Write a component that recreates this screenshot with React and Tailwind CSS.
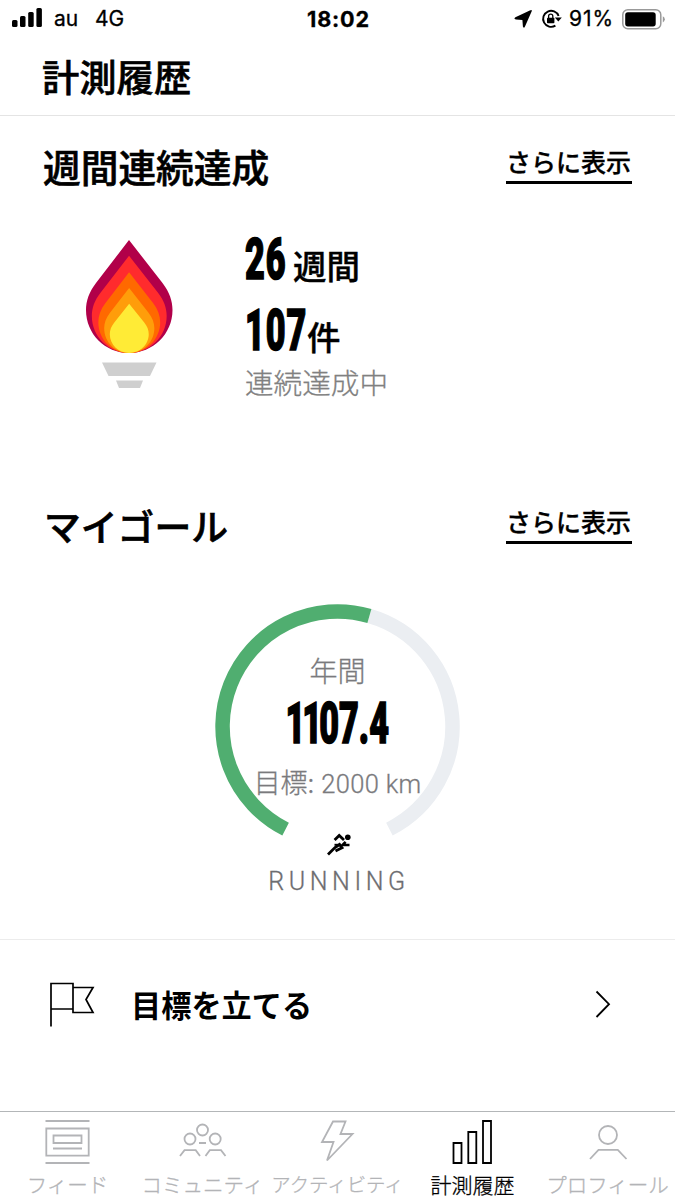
const jp = "font-['Noto_Sans_CJK_JP',sans-serif]";

function Signal() {
  return (
    <svg width="31" height="20" viewBox="0 0 31 20">
      <rect x="0" y="12" width="5.5" height="7" rx="1.5" />
      <rect x="8" y="8" width="5.5" height="11" rx="1.5" />
      <rect x="16.2" y="4" width="5.5" height="15" rx="1.5" />
      <rect x="24.4" y="0" width="5.5" height="19" rx="1.5" />
    </svg>
  );
}

function StatusBar() {
  return (
    <div className="grid h-[38px] shrink-0 grid-cols-3 items-center pr-[10px] pl-3 font-['Inter','Noto_Sans',sans-serif] text-[21px] leading-[36px] text-black [-webkit-text-stroke:.3px_currentColor]">
      <div className="flex items-center">
        <div className="w-[42px] pb-[2px]">
          <Signal />
        </div>
        <span className="w-[41px]">au</span>
        <span>4G</span>
      </div>
      <div className="text-center text-[21.6px] font-bold tracking-[.8px]">18:02</div>
      <div className="flex items-center justify-end">
        <svg width="18" height="18" viewBox="0 0 18 18" className="mr-[9px]">
          <path d="M17.6 1.4 L11 16.4 Q9.8 18.8 8.9 16.5 L8.4 10 L2 9.6 Q-.8 8.9 1.4 7.3 L15.8 .5 Q18.6 -.7 17.6 1.4Z" />
        </svg>
        <svg width="21" height="20" viewBox="0 0 21 20" className="mr-[7px] shrink-0" fill="none" stroke="black" strokeWidth="1.9">
          <path d="M17.6 7 A8 8 0 1 0 14.4 16.6" />
          <path d="M13.8 8.4 H20.8 L17.3 12.6Z" fill="black" stroke="none" />
          <rect x="6" y="8.7" width="7.4" height="5.6" rx=".8" fill="black" stroke="none" />
          <path d="M7.6 9.2 V7.2 a2.1 2.1 0 0 1 4.2 0 V9.2" strokeWidth="1.3" />
        </svg>
        <span className="mr-[8px] tracking-[.9px]">91%</span>
        <svg width="43" height="21" viewBox="0 0 43 21">
          <rect x=".8" y=".8" width="38" height="19" rx="5" fill="none" stroke="#999" strokeWidth="1.5" />
          <rect x="3.2" y="3.2" width="30.5" height="14.2" rx="2.7" />
          <path d="M40.8 7.2 q2 1 2 3.1 t-2 3.1z" fill="#999" />
        </svg>
      </div>
    </div>
  );
}

function MoreLink() {
  return (
    <a className="mt-[28px] block h-[40px] w-[126px] border-b-[3px] border-black text-[25px] leading-[35px] font-medium whitespace-nowrap text-black [-webkit-text-stroke:.3px_currentColor]">
      さらに表示
    </a>
  );
}

const drop =
  "M43 0 L76.5 43 C83.5 52 86.5 61 86.5 70 C86.5 94 67 113 43 113 C19 113 0 94 0 70 C0 61 3 52 10 43Z";

function Flame() {
  const layers = [
    ["#b10049", 1, 1],
    ["#ff2b2d", 0.865, 0.86],
    ["#ff6900", 0.715, 0.715],
    ["#ff9d0a", 0.58, 0.575],
    ["#ffeb36", 0.45, 0.435],
  ];
  return (
    <svg width="88" height="150" viewBox="0 0 88 150">
      {layers.map(([color, sx, sy]) => (
        <path key={color} d={drop} fill={color} transform={`translate(${43.3 * (1 - sx)} ${113 * (1 - sy)}) scale(${sx} ${sy})`} />
      ))}
      <path d="M16 122.5 H70.5 L64 136 H22.5Z M30 140.5 H57 L54 148 H33Z" fill="#cfcfcf" />
    </svg>
  );
}

function Stat({ value, unit, slot }) {
  return (
    <div className="flex h-[71px] items-start text-black">
      <span className={`${slot} h-[60px] shrink-0`}>
        <span className="inline-block origin-left scale-x-[.6] font-['Roboto',sans-serif] text-[57px] leading-[62px] font-black tracking-[1.5px] [-webkit-text-stroke:1.6px_currentColor]">{value}</span>
      </span>
      <span className="mt-[14px] text-[33.5px] leading-[44px] font-medium [-webkit-text-stroke:.4px_currentColor]">{unit}</span>
    </div>
  );
}

function Runner() {
  return (
    <svg width="25" height="23" viewBox="0 0 25 23" fill="none" stroke="black" strokeWidth="2.8">
      <circle cx="20.8" cy="4.2" r="2.8" fill="black" stroke="none" />
      <path d="M7.6 7 L12.2 2.4 L17 7" />
      <path d="M1 21.5 L8 14.5 L12.5 11.5 L15 14.8 L8.5 18" />
      <path d="M7.5 11.8 H13.5" strokeWidth="2" />
      <path d="M22.5 12 H15.5 L18.6 8.8" strokeWidth="2.6" />
    </svg>
  );
}

function GoalRing() {
  return (
    <div className="grid h-[246px] w-[246px]">
      <svg width="246" height="246" viewBox="-122.5 -122.5 246 246" fill="none" strokeWidth="14.5" className="col-start-1 row-start-1">
        <path d="M31.9 -110.5 A115 115 0 0 1 51.9 102.6" stroke="#ebeef2" />
        <path d="M-51.9 102.6 A115 115 0 0 1 31.9 -110.5" stroke="#50ae70" />
      </svg>
      <div className="col-start-1 row-start-1 flex flex-col items-center pt-[46px] text-[#7a7a7d]">
        <div className="text-[28px] leading-[40px] font-light [-webkit-text-stroke:.3px_currentColor]">年間</div>
        <div className="flex h-[67px] w-[103px] items-center justify-center">
          <span className="scale-x-[.6] font-['Roboto',sans-serif] text-[57px] leading-[67px] font-black text-black [-webkit-text-stroke:1.6px_currentColor]">
            <span className="tracking-[-5px]">11</span>07.4
          </span>
        </div>
        <div className="mt-[7px] flex items-baseline text-[27px] leading-[36px] font-light whitespace-nowrap [-webkit-text-stroke:.3px_currentColor]">
          <span>目標:&nbsp;</span>
          <span className="ml-[1px] font-['Roboto',sans-serif] text-[25.5px] tracking-[.3px]">2000 km</span>
        </div>
      </div>
    </div>
  );
}

const icons = {
  feed: (
    <path d="M1 1.5 H45 M1 43.5 H45 M1.8 9 H44.2 V36.2 H1.8Z M9 16 H37 V23.5 H9Z M8.5 29 H37.5" />
  ),
  community: (
    <>
      <circle cx="23" cy="10.5" r="5.5" />
      <circle cx="10.5" cy="19.5" r="5.5" />
      <circle cx="35.7" cy="19.5" r="5.5" />
      <path d="M19.5 23.5 H26.5 M.5 36.5 L5 30.7 H16.2 L20.5 36.5 M26 36.5 L30.3 30.7 H41.5 L46 36.5" />
    </>
  ),
  activity: <path d="M12.5 2 H25 L20 14.5 H32 L6.5 41 L13 22.5 H1.5Z" transform="translate(6 0)" />,
  chart: <path d="M3 23.5 H11 V43.5 H3Z M17.8 12.5 H25.8 V43.5 H17.8Z M32.5 1.5 H40.5 V43.5 H32.5Z" transform="translate(1 0)" />,
  profile: (
    <>
      <circle cx="23.5" cy="15.5" r="9" />
      <path d="M5.5 39.5 L14 30.3 H33.3 L42 39.5" />
    </>
  ),
};

const tabs = [
  { icon: "feed", label: "フィード", size: "text-[20.5px]" },
  { icon: "community", label: "コミュニティ", size: "text-[20.5px]" },
  { icon: "activity", label: "アクティビティ", size: "text-[19.4px]" },
  { icon: "chart", label: "計測履歴", size: "text-[21px]", active: true },
  { icon: "profile", label: "プロフィール", size: "text-[20.5px]" },
];

export default function App() {
  return (
    <div className={`flex h-[1200px] w-[675px] flex-col overflow-hidden bg-white text-black ${jp}`}>
      <StatusBar />
      <header className="h-[78px] shrink-0 border-b border-[#e4e4e4] pt-[17px] pl-[42px]">
        <h1 className="text-[37.3px] leading-[42px] font-medium [-webkit-text-stroke:.6px_currentColor]">計測履歴</h1>
      </header>

      <section className="h-[360px] shrink-0 pr-[43px] pl-[43px]">
        <div className="flex justify-between">
          <h2 className="pt-[29px] text-[37.7px] leading-[42px] font-medium [-webkit-text-stroke:.6px_currentColor]">週間連続達成</h2>
          <MoreLink />
        </div>
        <div className="flex pt-[42px]">
          <div className="w-[202px] pt-[11px] pl-[43px]">
            <Flame />
          </div>
          <div>
            <Stat value="26" unit="週間" slot="w-[48px]" />
            <Stat value="107" unit="件" slot="w-[62px]" />
            <p className="-mt-[9px] text-[28.6px] leading-[40px] font-light text-[#808080] [-webkit-text-stroke:.3px_currentColor]">連続達成中</p>
          </div>
        </div>
      </section>

      <section className="h-[464px] shrink-0 border-b border-[#ececec]">
        <div className="flex justify-between px-[43px]">
          <h2 className="pt-[28px] pl-[1px] text-[36.8px] leading-[42px] font-medium [-webkit-text-stroke:.6px_currentColor]">マイゴール</h2>
          <MoreLink />
        </div>
        <div className="flex flex-col items-center pt-[58px]">
          <GoalRing />
          <div className="-mt-[17px] h-[34px] pl-[3px]">
            <Runner />
          </div>
          <p className="pl-[3px] font-['Roboto',sans-serif] text-[25px] leading-[30px] font-light tracking-[4.6px] text-[#6d6d70] [-webkit-text-stroke:.3px_currentColor]">RUNNING</p>
        </div>
      </section>

      <button className="flex h-[171px] shrink-0 items-start pt-[42px] pl-[49px] text-left">
        <svg width="47" height="46" viewBox="0 0 47 46" fill="none" stroke="black" strokeWidth="1.7" className="mr-[35px]">
          <path d="M2 45 V2 H24 V27.5 H2 M24 6 H44 L37 18 L44 31 H24 V27" transform="translate(0 -.5)" />
        </svg>
        <span className="w-[464px] text-[30.2px] leading-[44px] font-bold">目標を立てる</span>
        <svg width="17" height="29" viewBox="0 0 17 29" fill="none" stroke="black" strokeWidth="1.8" className="mt-[8px]">
          <path d="M1.5 1.5 L14 14.2 L1.5 27" />
        </svg>
      </button>

      <nav className="grid h-[89px] shrink-0 grid-cols-5 border-t border-[#b3b6b8]">
        {tabs.map(({ icon, label, size, active }) => (
          <div key={icon} className={`flex flex-col items-center pt-[8px] ${active ? "text-black" : "text-[#b3b4b7]"}`}>
            <svg width="46" height="45" viewBox="0.5 0.5 46 45" fill="none" stroke="currentColor" strokeWidth="1.8" className="shrink-0 overflow-visible">
              {icons[icon]}
            </svg>
            <span className={`mt-[4px] leading-[30px] font-light whitespace-nowrap [-webkit-text-stroke:.3px_currentColor] ${size}`}>{label}</span>
          </div>
        ))}
      </nav>
    </div>
  );
}
